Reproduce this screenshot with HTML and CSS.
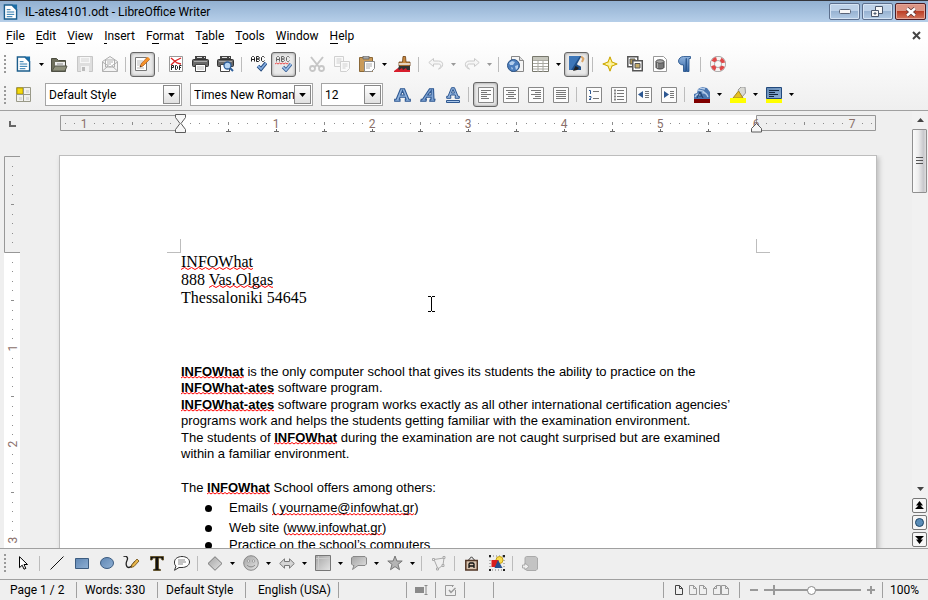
FILE: index.html
```html
<!DOCTYPE html>
<html lang="en">
<head>
<meta charset="utf-8">
<title>IL-ates4101.odt - LibreOffice Writer</title>
<link rel="stylesheet" href="styles.css">
</head>
<body>
<svg class="defs" aria-hidden="true">
  <defs>
    <linearGradient id="gray" x1="0" y1="0" x2="1" y2="1"><stop offset="0" stop-color="#a4a4a4"/><stop offset="1" stop-color="#e4e4e4"/></linearGradient>
    <linearGradient id="blue" x1="0" y1="0" x2="0" y2="1"><stop offset="0" stop-color="#8fb3de"/><stop offset="1" stop-color="#3465a4"/></linearGradient>
    <linearGradient id="steel" x1="0" y1="0" x2="1" y2="1"><stop offset="0" stop-color="#5f86b3"/><stop offset="1" stop-color="#8fb0d4"/></linearGradient>
    <pattern id="inch" x="120" y="0" width="96" height="17" patternUnits="userSpaceOnUse">
      <path d="M10 8h1M19 8h1M29 8h1M38 8h1M58 8h1M67 8h1M77 8h1M86 8h1" transform="translate(0 .5)" stroke="#8c8c8c"/>
      <path d="M48.500 7v3" stroke="#8c8c8c"/>
    </pattern>
    <pattern id="vinch" x="0" y="97" width="17" height="96" patternUnits="userSpaceOnUse">
      <path d="M8.500 10v1M8.500 19v1M8.500 29v1M8.500 38v1M8.500 58v1M8.500 67v1M8.500 77v1M8.500 86v1" stroke="#8c8c8c"/>
      <path d="M7 48.500h3" stroke="#8c8c8c"/>
    </pattern>
    <symbol id="doc" viewBox="0 0 16 16"><path d="M1.500.5h8l5 5v10h-13z" fill="#fff" stroke="#1b5d8c" stroke-width="1.500"/><path d="M9 0h6v6z" fill="#1b6ea8"/><path d="M4 5.500h4M4 8h8M4 10.500h8M4 13h6" stroke="#1b6ea8"/></symbol>
    <symbol id="drop" viewBox="0 0 5 3"><path d="M0 0h5L2.500 3z" fill="currentColor"/></symbol>
  </defs>
</svg>

<header class="titlebar">
  <svg class="app-icon" width="15" height="16"><use href="#doc"/></svg>
  <h1>IL-ates4101.odt - LibreOffice Writer</h1>
  <div class="winbtns">
    <button aria-label="Minimize"><svg width="12" height="6"><rect x=".5" y=".5" width="11" height="4" rx="1" fill="#f7f7f7" stroke="#5a6477"/></svg></button>
    <button aria-label="Restore"><svg width="13" height="12"><path d="M4.500.5h7v7h-7z" fill="#f7f7f7" stroke="#4a566b"/><path d="M.5 4.500h7v6h-7z" fill="#f7f7f7" stroke="#4a566b"/><path d="M3 7h2v1H3z" fill="#7f9ebf" stroke="#4a566b"/></svg></button>
    <button class="close" aria-label="Close"><svg width="12" height="10"><path d="M2 1.500l8 7M10 1.500l-8 7" stroke="#5d3535" stroke-width="4"/><path d="M2 1.500l8 7M10 1.500l-8 7" stroke="#fff" stroke-width="2.400"/></svg></button>
  </div>
</header>

<div class="chrome">
  <nav class="menubar">
    <button><u>F</u>ile</button><button><u>E</u>dit</button><button><u>V</u>iew</button><button><u>I</u>nsert</button><button>F<u>o</u>rmat</button><button>T<u>a</u>ble</button><button><u>T</u>ools</button><button><u>W</u>indow</button><button><u>H</u>elp</button>
    <button class="closedoc" aria-label="Close document"><svg width="9" height="9"><path d="M1 1l7 7M8 1L1 8" stroke="#444" stroke-width="2"/></svg></button>
  </nav>

  <div class="toolbar" role="toolbar" aria-label="Standard">
    <span class="grip"></span>
    <button aria-label="New"><svg width="15" height="16"><use href="#doc"/></svg></button><button class="dd" aria-label="New menu"><svg width="5" height="3"><use href="#drop"/></svg></button>
    <button aria-label="Open"><svg width="17" height="15"><path d="M.5 14.500v-13h5l2 2h7v11z" fill="#6d6e5c" stroke="#4b4c40"/><path d="M4 5h10v6H4z" fill="#eee"/><path d="M6 7h6" stroke="#888"/><path d="M1 14l3-5h12l-2 5z" fill="#8f917c" stroke="#55564a"/></svg></button>
    <button aria-label="Save"><svg width="16" height="16"><path d="M.5.500h15v15h-15z" fill="#dedede" stroke="#c6c6c6"/><path d="M3 1h10v6H3z" fill="#f7f7f7"/><path d="M4 3h8M4 5h8" stroke="#d5d5d5"/><path d="M4 10h8v6H4z" fill="#f3f3f3"/><path d="M5 11h3v4H5z" fill="#bbb"/></svg></button>
    <button aria-label="Email"><svg width="16" height="16" fill="#f4f4f4" stroke="#b0b0b0"><path d="M.5 5.500l7.500-5 7.500 5v10H.5z"/><path d="M3.500 4h9v7h-9z" fill="#fff"/><path d="M5 6h6M5 8h4" fill="none"/><path d="M.5 6L8 11l7.500-5M.5 15l5.500-5M15.500 15L10 10" fill="none"/></svg></button>
    <i class="sep"></i>
    <button class="on" aria-label="Edit mode"><svg width="17" height="16"><path d="M1.500 1.500h11v13h-11z" fill="#fff" stroke="#777"/><path d="M3 5h6M3 7h5M3 9h3M3 12h7" stroke="#bbb"/><path d="M6 11l1-3 6-6.500 2.500 2L9 10z" fill="#f5922a" stroke="#a9561a" stroke-width=".7"/><path d="M6 11l.5-1.500 1 1z" fill="#222"/><path d="M12.500 2l1.500-1 2 2-1 1.200z" fill="#f5922a"/></svg></button>
    <i class="sep"></i>
    <button aria-label="Export as PDF"><svg width="14" height="16"><path d="M.5.500h13v15H.5z" fill="#fff" stroke="#999"/><path d="M2 2l6 5 4 1M12 2L6 5 2 9" stroke="#d22" stroke-width="1.300" fill="none"/><path d="M2.500 14V9.500h2v2h-2M6.500 9.500v4h1l1-1v-2l-1-1zM10.500 14V9.500h2M10.500 11.500h1.500" stroke="#222" fill="none"/></svg></button>
    <button aria-label="Print"><svg width="17" height="16"><path d="M3 0h11v4H3z" fill="#444"/><path d="M5 1.500h5M12 1.500h1" stroke="#ddd"/><rect x=".5" y="3.500" width="16" height="7" rx="1" fill="#686868" stroke="#333"/><path d="M2 5.500h13" stroke="#aaa"/><path d="M3.500 8.500h10v7h-10z" fill="#fff" stroke="#444"/><path d="M5 11h7M5 13h7" stroke="#bbb"/></svg></button>
    <button aria-label="Print preview"><svg width="17" height="16"><path d="M3 0h11v4H3z" fill="#444"/><path d="M5 1.500h5M12 1.500h1" stroke="#ddd"/><rect x=".5" y="3.500" width="16" height="7" rx="1" fill="#686868" stroke="#333"/><path d="M2 5.500h13" stroke="#aaa"/><path d="M3.500 8.500h9v7h-9z" fill="#fff" stroke="#444"/><circle cx="10.500" cy="9.500" r="3.500" fill="#b5d4f3" stroke="#2d5f9b" stroke-width="1.300"/><path d="M13 12l3 3" stroke="#2d5f9b" stroke-width="2"/></svg></button>
    <i class="sep"></i>
    <button aria-label="Spelling"><svg width="17" height="16" fill="none"><path d="M1.500 5.500v-4l1-1h1l1 1v4M1.500 3.500h3M6.500.5v5h2l1-1-1-1.500h-2 2l1-1-1-1.500zM14.500 1.500l-1-1h-1l-1 1v3l1 1h1l1-1" stroke="#222"/><path d="M8 10l3 3 5-6" stroke="#254c80" stroke-width="3.600"/><path d="M8 10l3 3 5-6" stroke="#83ace0" stroke-width="1.800"/></svg></button>
    <button class="on" aria-label="Automatic spell checking"><svg width="17" height="16" fill="none"><path d="M1.500 5.500v-4l1-1h1l1 1v4M1.500 3.500h3M6.500.5v5h2l1-1-1-1.500h-2 2l1-1-1-1.500zM14.500 1.500l-1-1h-1l-1 1v3l1 1h1l1-1" stroke="#666"/><path d="M0 8l1.500-1L3 8l1.500-1L6 8l1.500-1L9 8l1.500-1L12 8l1.500-1" stroke="#e22" stroke-width=".8"/><path d="M8 11l3 3 5-6" stroke="#3c649b" stroke-width="3.400"/><path d="M8 11l3 3 5-6" stroke="#9fc1ea" stroke-width="1.600"/></svg></button>
    <i class="sep"></i>
    <button aria-label="Cut"><svg width="16" height="16" fill="none" stroke="#c6c6c6"><path d="M2 1l8 10M14 1L6 11" stroke-width="2"/><circle cx="3.500" cy="12.500" r="2.500" stroke-width="1.800"/><circle cx="12.500" cy="12.500" r="2.500" stroke-width="1.800"/></svg></button>
    <button aria-label="Copy"><svg width="16" height="16" fill="#fafafa" stroke="#d0d0d0"><path d="M.5.500h9v10h-9z"/><path d="M2.500 3h5M2.500 5h5M2.500 7h5"/><path d="M6.500 5.500h9v7l-3 3h-6z"/><path d="M8.500 8h5M8.500 10h5M8.500 12h3"/></svg></button>
    <button aria-label="Paste"><svg width="16" height="16"><path d="M.5 1.500h13v14H.5z" fill="#c99a58" stroke="#8a6838"/><path d="M4 0h6v3H4z" fill="#aaa" stroke="#666" stroke-width=".8"/><path d="M5.500 5.500h10v7l-3 3h-7z" fill="#fff" stroke="#888"/><path d="M7 8h6M7 10h6M7 12h4" stroke="#aaa"/></svg></button><button class="dd" aria-label="Paste menu"><svg width="5" height="3"><use href="#drop"/></svg></button>
    <button aria-label="Clone formatting"><svg width="17" height="16"><path d="M9 .5h2.500l.5 5.500h4v4H5V6h3.500z" fill="#c9893f" stroke="#6b3d12" stroke-width=".8"/><path d="M5 8h11" stroke="#eee" stroke-width="1.500"/><path d="M5 10h11v5H3z" fill="#333"/><path d="M0 15l4-3 1 2 3-2 1 2 3-2 1 2h3v2H0z" fill="#d81e2c"/></svg></button>
    <i class="sep"></i>
    <button aria-label="Undo"><svg width="16" height="12" fill="none"><path d="M5.500.5L.8 4.500 5.500 8.500V6h5c3 0 3 3 0 5 5-1 6-8 0-8h-5z" fill="#f6f6f6" stroke="#cacaca"/></svg></button><button class="dd off" aria-label="Undo menu"><svg width="5" height="3"><use href="#drop"/></svg></button>
    <button aria-label="Redo"><svg width="16" height="12" fill="none"><path d="M10.500.5l4.700 4-4.700 4V6h-5c-3 0-3 3 0 5-5-1-6-8 0-8h5z" fill="#f6f6f6" stroke="#cacaca"/></svg></button><button class="dd off" aria-label="Redo menu"><svg width="5" height="3"><use href="#drop"/></svg></button>
    <i class="sep"></i>
    <button aria-label="Hyperlink"><svg width="17" height="16"><path d="M4.500.5h8l4 4v11h-12z" fill="#f5f5f5" stroke="#888"/><path d="M12.500.5v4h4" fill="#ddd" stroke="#888"/><circle cx="6.500" cy="9.500" r="6" fill="#4c7ebd" stroke="#2c5488"/><path d="M2 7l3-2 3 1-2 3-3 0zM8 10l3-1 0 3-2 2zM4 11l2 1-1 2z" fill="#b4cfee"/></svg></button>
    <button aria-label="Table"><svg width="17" height="16"><path d="M.5.500h16v15H.5z" fill="#fff" stroke="#77776c"/><path d="M1 1h15v3H1z" fill="#c6c6bc"/><path d="M1 4.500h15M1 7.500h15M1 10.500h15M1 13h15M6 4v12M11 4v12" stroke="#a8a8a0"/></svg></button><button class="dd" aria-label="Table menu"><svg width="5" height="3"><use href="#drop"/></svg></button>
    <button class="on" aria-label="Show draw functions"><svg width="16" height="16"><path d="M0 0h12v14H0z" fill="#204f88"/><path d="M0 0h11L2 14H0z" fill="#3d76b8"/><path d="M13 2L9 9M15 5l-4 5" stroke="#eee" stroke-width="2.600"/><path d="M12 .5l3 2.500M14.500 2.500L13 6" stroke="#d9a468" stroke-width="2"/><path d="M4 15l2.500-5 3.500 2-2 2z" fill="#222"/></svg></button>
    <i class="sep"></i>
    <button aria-label="Navigator"><svg width="16" height="16"><path d="M8 .8L10 6l5.200 2L10 10l-2 5.200L6 10 .8 8 6 6z" fill="#f8e45a" stroke="#c9a400"/><path d="M8 4v8M4 8h8" stroke="#fffbd0"/></svg></button>
    <button aria-label="Gallery"><svg width="16" height="16"><path d="M.8.800h10v10H.8z" fill="#fff" stroke="#555" stroke-width="1.500"/><path d="M3 3h5v5H3z" fill="#b39a56" stroke="#555"/><path d="M5.800 4.800h9.500v10H5.800z" fill="#fff" stroke="#555" stroke-width="1.500"/><path d="M8 7.500h5v4.500H8z" fill="#c6ad6b" stroke="#555"/></svg></button>
    <button aria-label="Data sources"><svg width="14" height="16"><path d="M.5.500h10l3 3v12H.5z" fill="#fff" stroke="#999"/><path d="M3 5.500v6c1 2 7 2 8 0v-6z" fill="#777" stroke="#444"/><ellipse cx="7" cy="5.500" rx="4" ry="1.800" fill="#aaa" stroke="#555"/><path d="M4.500 7v5" stroke="#aaa"/></svg></button>
    <button aria-label="Formatting marks"><svg width="13" height="16"><path d="M12.500.5v2H11v13H8.500v-13H8v13H5.500V9C2 9 .5 7 .5 5s2-4.500 5-4.500z" fill="url(#blue)" stroke="#1d4b85" stroke-width=".8"/></svg></button>
    <i class="sep"></i>
    <button aria-label="Help"><svg width="16" height="16"><circle cx="8" cy="8" r="5.500" fill="none" stroke="#999" stroke-width="5"/><circle cx="8" cy="8" r="5.500" fill="none" stroke="#f6f3f2" stroke-width="3.600"/><circle cx="8" cy="8" r="5.500" fill="none" stroke="#e04848" stroke-width="3.600" stroke-dasharray="4.320 4.320" stroke-dashoffset="-2.160"/></svg></button>
  </div>

  <div class="toolbar format" role="toolbar" aria-label="Formatting">
    <span class="grip"></span>
    <button aria-label="Styles"><svg width="15" height="15"><path d="M.5.500h14v14H.5z" fill="#f1f1ee" stroke="#999988"/><path d="M1 1h6v6H1z" fill="#f4d90b" stroke="#b39b00"/><path d="M7.500 1v14M1 7.500h14" stroke="#999988"/><path d="M3 10h3v3H3zM10 10h3v3h-3zM10 3h3v3h-3z" fill="#ddd"/></svg></button>
    <span class="combo style-combo"><select aria-label="Paragraph style"><option>Default Style</option></select><i><svg width="7" height="4"><use href="#drop"/></svg></i></span>
    <span class="combo font-combo"><select aria-label="Font name"><option>Times New Roman</option></select><i><svg width="7" height="4"><use href="#drop"/></svg></i></span>
    <span class="combo size-combo"><select aria-label="Font size"><option>12</option></select><i><svg width="7" height="4"><use href="#drop"/></svg></i></span>
    <button aria-label="Bold"><svg width="17" height="14"><path d="M.7 13.300v-2h1.500L6.500.7h4l4.300 10.600h1.500v2h-5v-2h.7l-.7-2H6l-.7 2H6v2zM6.700 7h3.600L8.500 2.600z" fill="#8fb2dd" stroke="#2d5791" stroke-width="1.100" fill-rule="evenodd"/></svg></button>
    <button aria-label="Italic"><svg width="16" height="14"><path d="M.7 13.300l.5-2h1.300L9.500.7h4l.5 10.600h1l-.4 2H9.800l.4-2h.8l.1-2H6.600l-1.200 2h1l-.4 2zM7.800 7h3.300l.2-4.400z" fill="#7fa4d4" stroke="#2d5791" stroke-width="1.100" fill-rule="evenodd"/></svg></button>
    <button aria-label="Underline"><svg width="14" height="16"><path d="M.7 11.300v-2H2L5.500.7h3L12 9.300h1.300v2H9.200v-2h.5L9.200 8H4.800l-.5 1.300h.5v2zM5.500 6h3L7 2.500z" fill="#8fb2dd" stroke="#2d5791" fill-rule="evenodd"/><path d="M.5 13.500h13v2H.5z" fill="#a9c6e8" stroke="#2d5791"/></svg></button>
    <i class="sep"></i>
    <button class="on" aria-label="Align left"><svg width="16" height="16"><path class="card" d="M.5.500h15v15H.5z"/><path class="lines" d="M3 3.500h10M3 5.500h6M3 7.500h10M3 9.500h6M3 11.500h8"/></svg></button>
    <button aria-label="Align center"><svg width="16" height="16"><path class="card" d="M.5.500h15v15H.5z"/><path class="lines" d="M3 3.500h10M5 5.500h6M3 7.500h10M5 9.500h6M3 11.500h10"/></svg></button>
    <button aria-label="Align right"><svg width="16" height="16"><path class="card" d="M.5.500h15v15H.5z"/><path class="lines" d="M3 3.500h10M7 5.500h6M3 7.500h10M7 9.500h6M5 11.500h8"/></svg></button>
    <button aria-label="Justify"><svg width="16" height="16"><path class="card" d="M.5.500h15v15H.5z"/><path class="lines" d="M3 3.500h10M3 5.500h10M3 7.500h10M3 9.500h10M3 11.500h10"/></svg></button>
    <i class="sep"></i>
    <button aria-label="Numbered list"><svg width="16" height="16"><path class="card" d="M.5.500h15v15H.5z"/><path class="lines" d="M7 4.500h6M7 11.500h6"/><path d="M3 3.500h1.500V7M3 9.500h2v1.500L3 12.500h2" stroke="#2d5791" fill="none"/></svg></button>
    <button aria-label="Bulleted list"><svg width="16" height="16"><path class="card" d="M.5.500h15v15H.5z"/><path class="lines" d="M6 3.500h7M6 6.500h7M6 9.500h7M6 12.500h7"/><path d="M3 3.500h2M3 6.500h2M3 9.500h2M3 12.500h2" stroke="#888" stroke-width="2"/></svg></button>
    <button aria-label="Decrease indent"><svg width="16" height="16"><path class="card" d="M.5.500h15v15H.5z"/><path class="lines" d="M9 4.500h4M9 6.500h4M9 8.500h4M9 10.500h4"/><path d="M2 7.500L7 4v7z" fill="#2d5791"/></svg></button>
    <button aria-label="Increase indent"><svg width="16" height="16"><path class="card" d="M.5.500h15v15H.5z"/><path class="lines" d="M9 4.500h4M9 6.500h4M9 8.500h4M9 10.500h4"/><path d="M8 7.500L3 4v7z" fill="#2d5791"/></svg></button>
    <i class="sep"></i>
    <button aria-label="Font color"><svg width="16" height="16"><path d="M0 12V7l3-1 1-4 4-2 5 1 3 4v7z" fill="#4a76b0"/><path d="M1 10c2-4 4-3 5-1M4 3l5 1 3 3M8 6c3-1 5 1 6 4M6 1l5 1" stroke="#b6cdea" fill="none" stroke-width="1.300"/><path d="M3 11l3-6 3 6M5 9h3" stroke="#1d3f6e" fill="none"/><path d="M0 12h16v4H0z" fill="#800000"/></svg></button><button class="dd" aria-label="Font color menu"><svg width="5" height="3"><use href="#drop"/></svg></button>
    <button aria-label="Highlighting"><svg width="16" height="16"><path d="M8 3l3-3h4l.5 6-3.500 4z" fill="#dadad4" stroke="#999"/><path d="M3 11l5.500-7 4.500 7z" fill="#e6bf21" stroke="#a88a20"/><path d="M0 11h16v5H0z" fill="#ff0"/></svg></button><button class="dd" aria-label="Highlighting menu"><svg width="5" height="3"><use href="#drop"/></svg></button>
    <button aria-label="Background color"><svg width="16" height="16"><path d="M.5.500h15v11H.5z" fill="url(#steel)" stroke="#22497c"/><path d="M3 3.500h10M3 5.500h6M3 7.500h9M3 9.500h5" stroke="#12263f"/><path d="M0 12h16v4H0z" fill="#ff0"/></svg></button><button class="dd" aria-label="Background color menu"><svg width="5" height="3"><use href="#drop"/></svg></button>
  </div>
</div>

<main class="work">
  <div class="corner"><svg width="7" height="6"><path d="M1 0v5h6" fill="none" stroke="#666" stroke-width="2"/></svg></div>
  <div class="hruler">
    <svg width="817" height="21" font-size="12">
      <path d="M120 0h576v17H120z" fill="#fff"/>
      <path d="M120 .5H.5v15H120M696.500 15.500V.5h119v15z" fill="#efefef" stroke="#979797"/>
      <path d="M4 0h808v17H4z" fill="url(#inch)"/>
      <path d="M168.500 14v3M166 16.500h5M216.500 14v3M214 16.500h5M264.500 14v3M262 16.500h5M312.500 14v3M310 16.500h5M360.500 14v3M358 16.500h5M408.500 14v3M406 16.500h5M456.500 14v3M454 16.500h5M504.500 14v3M502 16.500h5M552.500 14v3M550 16.500h5M600.500 14v3M598 16.500h5M648.500 14v3M646 16.500h5" stroke="#6a6a6a"/>
      <g class="nums"><text x="24" y="13">1</text><text x="216" y="13">1</text><text x="312" y="13">2</text><text x="408" y="13">3</text><text x="504" y="13">4</text><text x="600" y="13">5</text><text x="696" y="13">6</text><text x="792" y="13">7</text></g>
      <path d="M115.500-.5h10v3l-4.500 6 4.500 6v3h-10v-3l4.500-6-4.500-6zM696.500 8.500l5 5v3.500h-10v-3.500z" fill="#f7f7f7" stroke="#5c5c5c"/>
    </svg>
  </div>
  <div class="vruler">
    <svg width="17" height="100%">
      <path d="M0 97h17v2000H0z" fill="#fff"/>
      <path d="M.5 1.500h16v96H.5z" fill="#efefef" stroke="#979797"/>
      <path d="M0 4h17v2000H0z" fill="url(#vinch)"/>
      <g class="nums"><text transform="translate(13 193) rotate(-90)">1</text><text transform="translate(13 289) rotate(-90)">2</text><text transform="translate(13 385) rotate(-90)">3</text></g>
    </svg>
  </div>
  <div class="canvas">
    <article class="paper">
      <div class="corners"><i></i><i></i></div>
      <address><span class="bad big">INFOWhat</span><br>888 <span class="bad big">Vas.Olgas</span><br>Thessaloniki 54645</address>
      <p><b class="bad">INFOWhat</b> is the only computer school that gives its students the ability to practice on the<br><b class="bad">INFOWhat-ates</b> software program.</p>
      <p><b class="bad">INFOWhat-ates</b> software program works exactly as all other international certification agencies’<br>programs work and helps the students getting familiar with the examination environment.</p>
      <p>The students of <b class="bad">INFOWhat</b> during the examination are not caught surprised but are examined<br>within a familiar environment.</p>
      <p class="lead">The <b class="bad">INFOWhat</b> School offers among others:</p>
      <ul>
        <li>Emails <span class="bad">( yourname@infowhat.gr</span>)</li>
        <li>Web site (<span class="bad">www.infowhat.gr</span>)</li>
        <li class="tight">Practice on the school’s computers</li>
      </ul>
      <svg class="ibeam" width="7" height="16"><path d="M0 .5h3M4 .5h3M3.500 1v14M0 15.500h3M4 15.500h3" stroke="#000"/></svg>
    </article>
  </div>
  <aside class="scroll">
    <button class="arrow" aria-label="Scroll up"><svg width="7" height="4"><path d="M0 4h7L3.500 0z" fill="#444"/></svg></button>
    <div class="track"><div class="thumb"><svg width="7" height="8"><path d="M0 .5h7M0 3.500h7M0 6.500h7" stroke="#555"/></svg></div></div>
    <button class="arrow" aria-label="Scroll down"><svg width="7" height="4"><path d="M0 0h7L3.500 4z" fill="#444"/></svg></button>
    <button class="nav" aria-label="Previous page"><svg width="9" height="9"><path d="M1 4.500h7L4.500 0zM0 8h9L4.500 3.500z"/></svg></button>
    <button class="nav" aria-label="Navigation"><svg width="9" height="9"><circle cx="4.500" cy="4.500" r="4" fill="#5a8db8" stroke="#1f4666"/></svg></button>
    <button class="nav" aria-label="Next page"><svg width="9" height="9"><path d="M0 1h9L4.500 5.500zM1 4.500h7L4.500 9z"/></svg></button>
  </aside>
</main>

<div class="toolbar draw" role="toolbar" aria-label="Drawing">
  <span class="grip"></span>
  <button aria-label="Select"><svg width="9" height="14"><path d="M.5.700v11l2.700-2.500 1.800 4 1.800-.8L5 8.500h3.500z" fill="#fff" stroke="#000"/></svg></button>
  <i class="sep"></i>
  <button aria-label="Line"><svg width="14" height="14"><path d="M.5 13.500l13-13" stroke="#111"/></svg></button>
  <button aria-label="Rectangle"><svg width="14" height="11"><path d="M.5.500h13v10H.5z" fill="url(#steel)" stroke="#3c5c80"/></svg></button>
  <button aria-label="Ellipse"><svg width="14" height="12"><ellipse cx="7" cy="6" rx="6.500" ry="5.500" fill="url(#steel)" stroke="#3c5c80"/></svg></button>
  <button aria-label="Freeform line"><svg width="17" height="14"><path d="M.5.500c3-1 5 1 3.500 4s-1 7 2 7 4-4 6-6" fill="none" stroke="#222" stroke-width="1.300"/><path d="M8 11.500l1-3L14 3l2 2-5 5.500z" fill="#e8b64a" stroke="#6b4a12" stroke-width=".8"/></svg></button>
  <button aria-label="Text"><svg width="14" height="15"><path d="M.5.500h13V4h-1.500L11 2H8.500v11l2 .5v1h-7v-1l2-.5V2H3L2 4H.5z" fill="#111" stroke="#5d4a1c" stroke-width=".8"/></svg></button>
  <button aria-label="Callout"><svg width="17" height="15"><path d="M9 .5c4 0 7.500 2.200 7.500 5.500s-3.500 5.500-7.500 5.500H6l-4.500 2.800L3 10C1.500 9 1.500 7.500 1.500 6 1.500 2.700 5 .5 9 .5z" fill="#fff" stroke="#333"/><path d="M5 4h7M5 6h8M5 8h5" stroke="#888"/></svg></button>
  <i class="sep"></i>
  <button aria-label="Basic shapes"><svg width="16" height="15"><path d="M8 .7l7 6.800-7 6.800-7-6.800z" fill="url(#gray)" stroke="#777"/></svg></button><button class="dd" aria-label="Basic shapes menu"><svg width="5" height="3"><use href="#drop"/></svg></button>
  <button aria-label="Symbol shapes"><svg width="16" height="16"><circle cx="8" cy="8" r="7.300" fill="url(#gray)" stroke="#888"/><circle cx="5.500" cy="6" r="1.200" fill="#eee" stroke="#888" stroke-width=".7"/><circle cx="10.500" cy="6" r="1.200" fill="#eee" stroke="#888" stroke-width=".7"/><path d="M4 10c2 2.500 6 2.500 8 0" fill="none" stroke="#888"/></svg></button><button class="dd" aria-label="Symbol shapes menu"><svg width="5" height="3"><use href="#drop"/></svg></button>
  <button aria-label="Block arrows"><svg width="16" height="11"><path d="M.7 5.500L5.500.8v2.700h5V.8l4.800 4.700-4.800 4.700V7.500h-5v2.700z" fill="#d5d5d5" stroke="#777"/></svg></button><button class="dd" aria-label="Block arrows menu"><svg width="5" height="3"><use href="#drop"/></svg></button>
  <button aria-label="Flowchart"><svg width="16" height="16"><path d="M.5.500h15v15H.5z" fill="url(#gray)" stroke="#777"/><path d="M1 3.500h14M3.500 1v14" stroke="#ccc"/></svg></button><button class="dd" aria-label="Flowchart menu"><svg width="5" height="3"><use href="#drop"/></svg></button>
  <button aria-label="Callout shapes"><svg width="16" height="14"><path d="M2 .5h12l1.500 1.500v6L14 9.500H7L1.500 13.500 3 9.500H2L.5 8V2z" fill="url(#gray)" stroke="#888"/></svg></button><button class="dd" aria-label="Callout shapes menu"><svg width="5" height="3"><use href="#drop"/></svg></button>
  <button aria-label="Stars"><svg width="16" height="16"><path d="M8 1l1.900 5h5.300l-4.200 3.400 1.500 5.300L8 11.600l-4.500 3.100L5 9.400.8 6h5.300z" fill="#b4b4b4" stroke="#777"/></svg></button><button class="dd" aria-label="Stars menu"><svg width="5" height="3"><use href="#drop"/></svg></button>
  <i class="sep"></i>
  <button aria-label="Edit points"><svg width="14" height="15" fill="#efefef" stroke="#aaa"><path d="M2 3.500L12 2l-1 7-5 4z" fill="none"/><path d="M.5 2.500h2v2h-2zM11 .5h2v2h-2zM10 8.500h2v2h-2zM4.500 12h2v2h-2z"/></svg></button>
  <i class="sep"></i>
  <button aria-label="Fontwork"><svg width="13" height="15"><path d="M3.500 4L6.500.8l3 3.200" fill="none" stroke="#333"/><path d="M.8 4.500h11.500v9.500H.8z" fill="#d9c3ae" stroke="#513626" stroke-width="1.500"/><path d="M4 12V8l1-1h3l1 1v4M4 10h5" stroke="#111" fill="none" stroke-width="1.300"/></svg></button>
  <button aria-label="From file"><svg width="16" height="16"><path d="M1 1h14v14H1z" fill="none" stroke="#777" stroke-dasharray="1 2"/><circle cx="10.500" cy="5" r="3.500" fill="#f8dc4c" stroke="#c5a017"/><path d="M2.500 5h7v7h-7z" fill="#d81e1e"/><path d="M9 5l4.500 8h-8z" fill="#274f8d"/><path d="M0 0h2v2H0zM14 0h2v2h-2zM0 14h2v2H0zM14 14h2v2h-2z" fill="#222"/></svg></button>
  <i class="sep"></i>
  <button aria-label="Extrusion"><svg width="16" height="15"><path d="M3 1.500L4.500.5h9L15.500 2v11l-1.500 1.500H5L3 13z" fill="#c3c3c3" stroke="#aaa"/><path d="M.5 9H3V7l4 3.500L3 14v-2H.5z" fill="#efefef" stroke="#aaa"/></svg></button>
</div>

<footer class="status">
  <span class="s-page">Page 1 / 2</span>
  <span class="s-words">Words: 330</span>
  <span class="s-style">Default Style</span>
  <span class="s-lang">English (USA)</span>
  <span class="s-mode"></span>
  <span class="s-icon"><svg width="13" height="10"><path d="M0 2h9v6H0z" fill="#8a8a8a"/><path d="M9.500.5h3M9.500 9.500h3M11 0v10" stroke="#8a8a8a"/></svg></span>
  <span class="s-icon"><svg width="11" height="11" fill="none" stroke="#999"><path d="M10.500 5v5.500H.5V.5h8L7 2"/><path d="M4 5l2 2.500L10.500 3" stroke-width="1.500"/></svg></span>
  <span class="s-icon"></span>
  <span class="s-fill"></span>
  <span class="s-view">
    <button aria-label="Single page"><svg width="8" height="10" fill="none" stroke="#444"><path d="M.5.500h4l3 3v6h-7zM4.500.5v3h3"/></svg></button>
    <button aria-label="Multiple pages"><svg width="18" height="10" fill="none" stroke="#999"><path d="M.5.500h4l3 3v6h-7zM4.500.5v3h3M10.500.5h4l3 3v6h-7zM14.500.5v3h3"/></svg></button>
    <button aria-label="Book view"><svg width="16" height="10" fill="none" stroke="#999"><path d="M7.500.500h-4l-3 3v6h7zM3.500.5v3h-3M8.500.5h4l3 3v6h-7zM12.500.5v3h3"/></svg></button>
  </span>
  <span class="s-zoom">
    <button aria-label="Zoom out"><svg width="8" height="8"><path d="M0 4h8" stroke="#999" stroke-width="2"/></svg></button>
    <input type="range" min="0" max="100" value="49" aria-label="Zoom">
    <button aria-label="Zoom in"><svg width="8" height="8"><path d="M0 4h8M4 0v8" stroke="#999" stroke-width="2"/></svg></button>
  </span>
  <span class="s-pct">100%</span>
</footer>
</body>
</html>
```
FILE: styles.css
```css
* { box-sizing: border-box; }
html, body { height: 100%; }
body {
  margin: 0;
  display: flex;
  flex-direction: column;
  overflow: hidden;
  background: #efefef;
  color: #000;
  font: 12px/16px Roboto, "Open Sans", sans-serif;
  white-space: nowrap;
}
svg { display: block; flex: none; }
.defs { position: absolute; width: 0; height: 0; }
button { padding: 0; border: 0; background: none; font: inherit; color: inherit; }

.titlebar {
  display: flex;
  align-items: center;
  height: 22px;
  padding: 0 2px 0 3px;
  border-top: 1px solid #33343a;
  background: linear-gradient(#92b0d1, #b6cfe9);
}
.titlebar h1 { flex: 1; margin: 0 0 0 7px; font-size: 12px; font-weight: 400; }
.winbtns { display: flex; gap: 2px; }
.winbtns button {
  display: flex;
  align-items: center;
  justify-content: center;
  width: 31px;
  height: 17px;
  border: 1px solid #5c6f8d;
  border-radius: 2px;
  box-shadow: inset 0 0 0 1px #d5e3f3;
  background: linear-gradient(#bdd1e8 50%, #98b3d2 50%, #b2cbe5);
}
.winbtns .close {
  border-color: #4c1c24;
  box-shadow: inset 0 0 0 1px #e5a799;
  background: linear-gradient(#dc9484 50%, #bb3f27 50%, #d4765c);
}

.chrome { border-bottom: 1px solid #a0a0a0; background: linear-gradient(#fff 20%, #efefef); }
.menubar { display: flex; align-items: center; height: 27px; padding: 0 7px 0 6px; gap: 11px; }
.menubar u { border-bottom: 1px solid #000; text-decoration: none; }
.closedoc { margin-left: auto; }

.toolbar { display: flex; align-items: center; height: 30px; padding-left: 4px; }
.format { height: 31px; }
.toolbar button {
  display: flex;
  flex: none;
  align-items: center;
  justify-content: center;
  width: 25px;
  height: 25px;
}
.toolbar .dd { width: 11px; }
.toolbar .off { color: #999; }
.toolbar .on {
  border: 1px solid #666;
  border-radius: 3px;
  box-shadow: inset 0 0 3px #888;
  background: #e9e9e9;
}
.grip { flex: none; width: 2px; height: 18px; margin-right: 5px; background: repeating-linear-gradient(#999 0 2px, transparent 2px 4px); }
.sep { flex: none; width: 1px; height: 15px; margin: 0 4px 0 3px; background: #bcbcbc; }
.card { fill: #fcfcfc; stroke: #888; }
.lines { stroke: #777; }

.combo { display: grid; flex: none; align-items: center; height: 23px; border: 1px solid #a5a5a5; background: #fff; }
.combo select {
  grid-area: 1 / 1;
  width: 100%;
  height: 21px;
  padding: 0 0 0 3px;
  border: 0;
  appearance: none;
  background: none;
  font: inherit;
  color: inherit;
}
.combo i {
  grid-area: 1 / 1;
  justify-self: end;
  display: flex;
  align-items: center;
  justify-content: center;
  width: 17px;
  height: 19px;
  margin-right: 1px;
  border: 1px solid #888;
  background: linear-gradient(#fff, #e0e0e0);
  pointer-events: none;
}
.style-combo { width: 137px; margin-left: 9px; }
.font-combo { width: 123px; margin-left: 8px; }
.size-combo { width: 62px; margin: 0 7px 0 8px; }

.work { flex: 1; min-height: 0; display: grid; grid-template: 44px minmax(0, 1fr) / 20px minmax(0, 1fr) 16px; }
.corner { padding: 10px 0 0 9px; }
.hruler { padding: 4px 0 0 40px; }
.hruler svg, .ibeam { overflow: visible; }
.nums { fill: #8a6f6a; font-size: 12px; text-anchor: middle; }
.vruler { padding-left: 4px; overflow: hidden; }
.canvas { padding: 0 35px 0 39px; overflow: hidden; }
.paper {
  position: relative;
  height: 1056px;
  padding: 83px 106px 0 107px;
  border: 1px solid #bdbdbd;
  background: #fff;
  box-shadow: 2px 2px 5px #bbb;
  font: 13px/16px "Liberation Sans", Arial, sans-serif;
}
.corners { display: flex; justify-content: space-between; }
.corners i { width: 14px; height: 14px; border: solid #bdbdbd; border-width: 0 1px 1px 0; }
.corners i:last-child { border-width: 0 0 1px 1px; }
.paper address { margin: 0 14px 57px; font: 16px/18px "Liberation Serif", "Times New Roman", serif; }
.paper p { margin: 0 14px 1px; }
.paper .lead { margin: 18px 14px 2px; }
.bad { background: url("data:image/svg+xml,%3Csvg xmlns='http://www.w3.org/2000/svg' width='4' height='3'%3E%3Cpath d='M0 2l2-1.500 2 1.500' fill='none' stroke='red'/%3E%3C/svg%3E") repeat-x 0 100%; }
.big { background-image: url("data:image/svg+xml,%3Csvg xmlns='http://www.w3.org/2000/svg' width='7' height='3'%3E%3Cpath d='M0 2.500l3.500-2 3.500 2' fill='none' stroke='red'/%3E%3C/svg%3E"); }
.paper ul { margin: 0 14px; padding-left: 48px; list-style: none; }
.paper li { display: flex; align-items: center; height: 20px; white-space: pre; }
.paper li::before { content: ""; width: 7px; height: 7px; margin: 0 17px 0 -24px; border-radius: 50%; background: #000; }
.paper .tight { height: 14px; }
.ibeam { position: absolute; left: 368px; top: 140px; }

.scroll { grid-area: 1 / 3 / 3 / 4; display: flex; flex-direction: column; align-items: stretch; background: #f1f1f1; }
.scroll button { display: flex; align-items: center; justify-content: center; flex: none; }
.scroll .arrow { height: 18px; }
.track { flex: 1; }
.thumb {
  display: flex;
  align-items: center;
  justify-content: center;
  width: 15px;
  height: 64px;
  border: 1px solid #8f8f8f;
  border-radius: 1px;
  background: linear-gradient(90deg, #fafafa, #eee 40%, #c8c8cc 80%, #ddd);
}
.scroll .nav { width: 15px; height: 15px; margin: 0 0 2px; border: 1px solid #777; border-radius: 2px; background: #f6f6f6; }
.scroll .nav:last-child { margin-bottom: 1px; }

.draw { height: 31px; padding-bottom: 2px; border-top: 1px solid #a0a0a0; }

.status { display: flex; align-items: center; height: 21px; border-top: 1px solid #a0a0a0; }
.status > span { display: flex; align-items: center; height: 16px; border-right: 1px solid #a0a0a0; }
.status .s-page { width: 77px; padding-left: 10px; }
.status .s-words { width: 81px; padding-left: 8px; }
.status .s-style { width: 88px; padding-left: 8px; }
.status .s-lang { width: 93px; padding-left: 12px; }
.status .s-mode { width: 68px; }
.status .s-icon { width: 29px; justify-content: center; }
.status .s-fill { flex: 1; }
.status .s-view { width: 76px; padding-left: 11px; gap: 6px; }
.status .s-zoom { width: 143px; padding-left: 10px; gap: 6px; }
.status .s-pct { width: 45px; padding-left: 7px; border: 0; }
.s-zoom input {
  width: 97px;
  height: 12px;
  margin: 0;
  appearance: none;
  background: linear-gradient(#999, #999) 9px 50% / 2px 10px no-repeat, linear-gradient(#999, #999) 0 50% / 100% 2px no-repeat;
}
.s-zoom input::-webkit-slider-thumb { appearance: none; width: 9px; height: 9px; border: 1px solid #888; border-radius: 50%; background: #fff; }
```
